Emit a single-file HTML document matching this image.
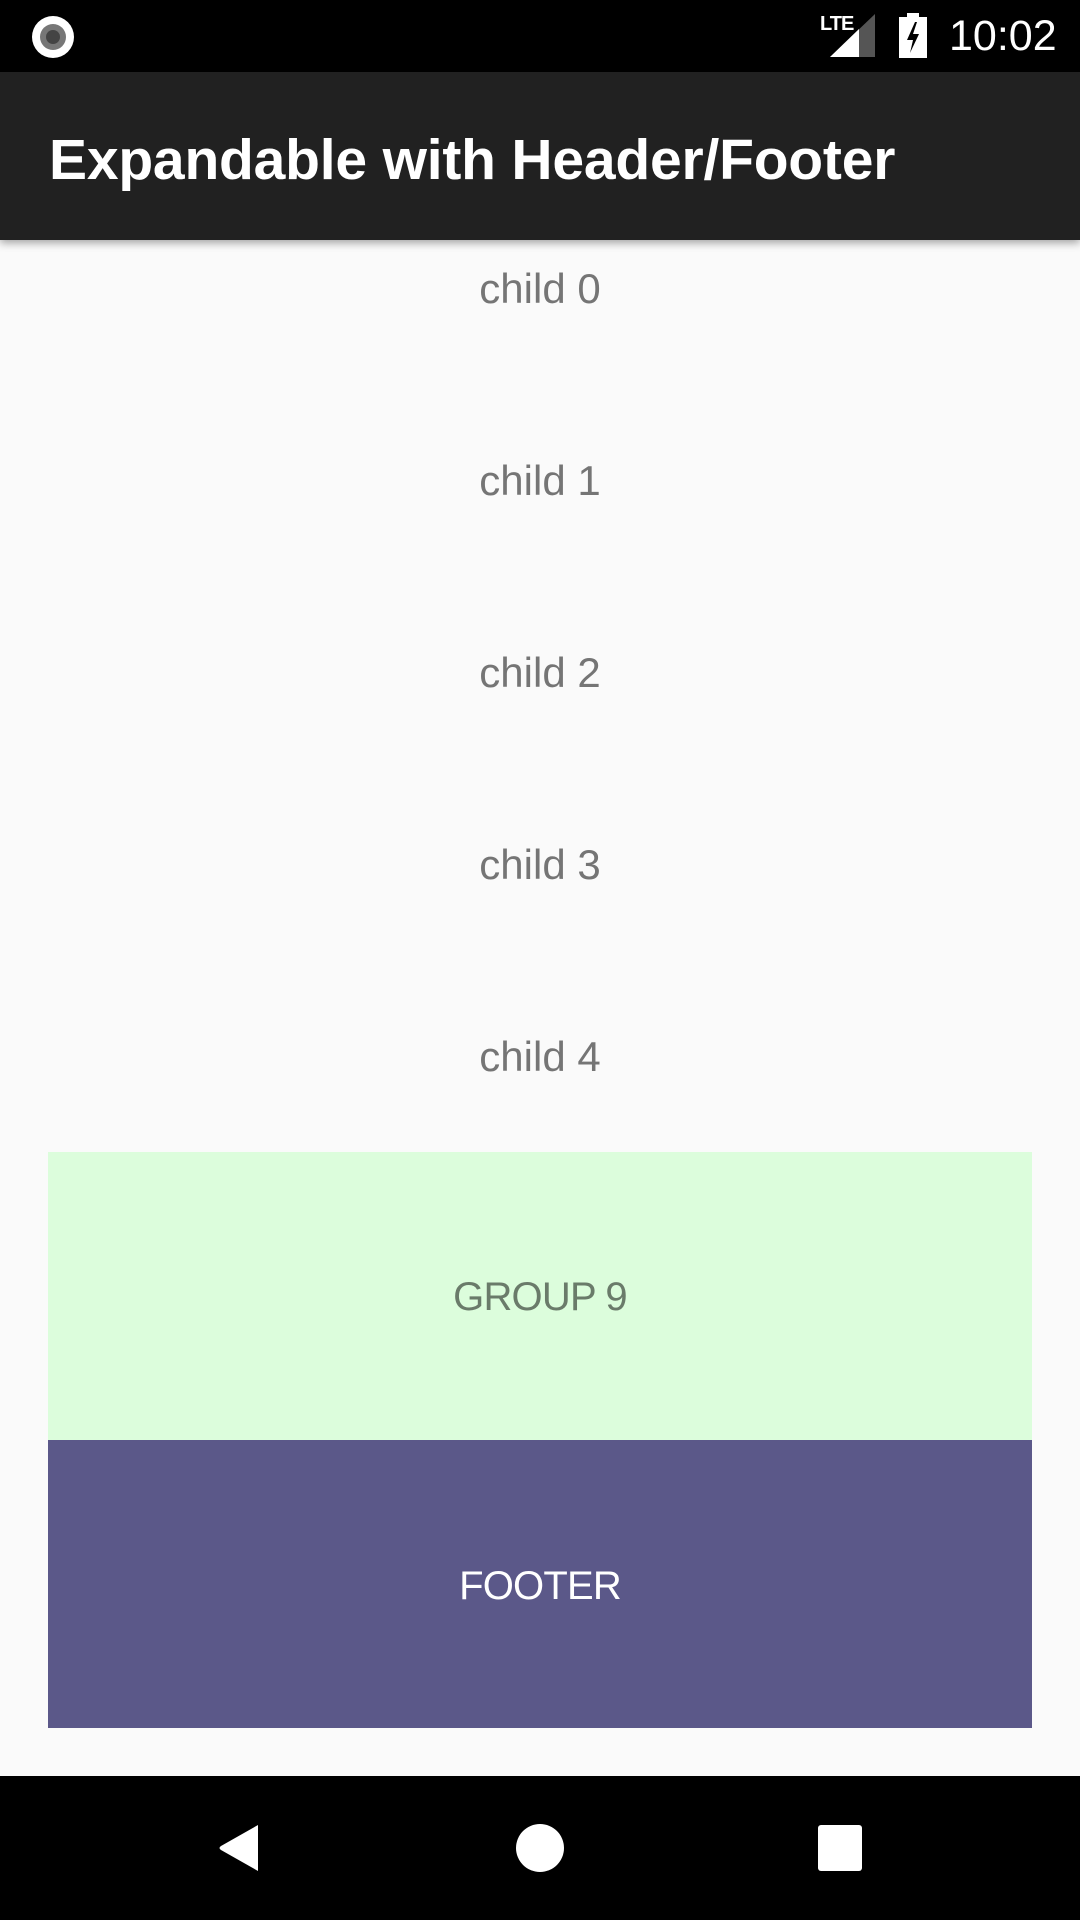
<!DOCTYPE html>
<html><head><meta charset="utf-8"><style>
*{margin:0;padding:0;box-sizing:border-box}
body{width:1080px;height:1920px;background:#fafafa;position:relative;overflow:hidden;font-family:"Liberation Sans",sans-serif}
.abs{position:absolute}
.status{left:0;top:0;width:1080px;height:72px;background:#000}
.bar{left:0;top:72px;width:1080px;height:168px;background:#212121;box-shadow:0 3px 8px rgba(0,0,0,.35);z-index:2}
.title{left:49px;top:76px;height:168px;line-height:168px;color:#fff;font-size:57px;font-weight:bold;white-space:nowrap;letter-spacing:-0.2px}
.child{left:0;width:1080px;text-align:center;color:#757575;font-size:42px;height:60px;line-height:60px}
.nav{left:0;top:1776px;width:1080px;height:144px;background:#000}
</style></head><body>
<div class="abs status"></div>
<svg class="abs" style="left:30px;top:14px" width="46" height="46" viewBox="0 0 46 46"><circle cx="23" cy="23" r="21" fill="#fff"/><circle cx="23" cy="23" r="13" fill="#777"/><circle cx="23" cy="23" r="7" fill="#444"/></svg>
<div class="abs" style="left:820px;top:13px;color:#fff;font-size:20px;font-weight:bold;letter-spacing:-1px">LTE</div>
<svg class="abs" style="left:830px;top:14px" width="45" height="43"><polygon points="0,43 45,0 45,43" fill="#555"/><polygon points="0,43 29,15 29,43" fill="#fff"/></svg>
<svg class="abs" style="left:899px;top:13px" width="28" height="45"><rect x="8" y="0" width="12" height="5" fill="#fff"/><rect x="0" y="4" width="28" height="41" fill="#fff"/><polygon points="16,9 8,27 14,27 11,40 20,21 14,21 18,9" fill="#000"/></svg>
<div class="abs" style="left:949px;top:10px;color:#fff;font-size:43px;line-height:52px">10:02</div>
<div class="abs bar"></div>
<div class="abs title" style="z-index:3">Expandable with Header/Footer</div>
<div class="abs child" style="top:259px">child 0</div>
<div class="abs child" style="top:451px">child 1</div>
<div class="abs child" style="top:643px">child 2</div>
<div class="abs child" style="top:835px">child 3</div>
<div class="abs child" style="top:1027px">child 4</div>
<div class="abs" style="left:48px;top:1152px;width:984px;height:288px;background:#dcfddc;color:#6a7b6a;font-size:40px;letter-spacing:-0.8px;text-align:center;line-height:290px">GROUP 9</div>
<div class="abs" style="left:48px;top:1440px;width:984px;height:288px;background:#5b5889;color:#fff;font-size:40px;letter-spacing:-0.8px;text-align:center;line-height:292px">FOOTER</div>
<div class="abs nav"></div>
<svg class="abs" style="left:218px;top:1824px" width="44" height="48"><path d="M40,1 L40,47 L3,26 Q0,24 3,22 Z" fill="#fff"/></svg>
<svg class="abs" style="left:516px;top:1824px" width="48" height="48"><circle cx="24" cy="24" r="24" fill="#fff"/></svg>
<div class="abs" style="left:818px;top:1825px;width:44px;height:46px;background:#fff;border-radius:3px"></div>
</body></html>
